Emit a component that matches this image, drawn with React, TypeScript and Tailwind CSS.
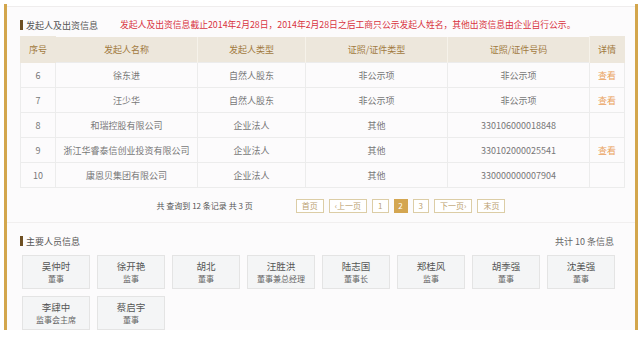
const rows = [
  { no: "6", name: "徐东进", type: "自然人股东", certType: "非公示项", certNo: "非公示项", link: true },
  { no: "7", name: "汪少华", type: "自然人股东", certType: "非公示项", certNo: "非公示项", link: true },
  { no: "8", name: "和瑞控股有限公司", type: "企业法人", certType: "其他", certNo: "330106000018848", link: false },
  { no: "9", name: "浙江华睿泰信创业投资有限公司", type: "企业法人", certType: "其他", certNo: "330102000025541", link: true },
  { no: "10", name: "康恩贝集团有限公司", type: "企业法人", certType: "其他", certNo: "330000000007904", link: false },
];

const people = [
  { name: "吴仲时", role: "董事" },
  { name: "徐开艳", role: "监事" },
  { name: "胡北", role: "董事" },
  { name: "汪胜洪", role: "董事兼总经理" },
  { name: "陆志国", role: "董事长" },
  { name: "郑桂风", role: "监事" },
  { name: "胡季强", role: "董事" },
  { name: "沈美强", role: "董事" },
  { name: "李肆中", role: "监事会主席" },
  { name: "蔡启宇", role: "董事" },
];

const pageBtn =
  "h-[14px] px-[5px] flex items-center justify-center border border-[#dccda6] bg-white text-[#bba170] text-[8px] leading-none";

function SectionTitle({ children }: { children: React.ReactNode }) {
  return (
    <div className="flex items-center h-[12px] gap-[3px]">
      <span className="w-[3px] h-[10px] bg-[#6e4f22]" />
      <span className="text-[9px] text-[#555] leading-none">{children}</span>
    </div>
  );
}

export default function App() {
  return (
    <div
      className="w-[644px] h-[339px] bg-white overflow-hidden pt-[4px]"
      style={{ fontFamily: '"Noto Sans CJK SC", "Noto Sans", sans-serif' }}
    >
      <div className="ml-[4px] w-[634px] h-[326px] border-x-[3px] border-[#d3a64c] bg-[#fcfbfc]">
        <div className="h-[3px] bg-white border-b border-[#efeded]" />

        {/* 发起人及出资信息 */}
        <div className="pl-[13px] pr-[11px] pt-[12px]">
          <div className="flex items-center">
            <SectionTitle>发起人及出资信息</SectionTitle>
            <span className="ml-[22px] text-[8.8px] leading-none text-[#d8333f]">
              发起人及出资信息截止2014年2月28日，2014年2月28日之后工商只公示发起人姓名，其他出资信息由企业自行公示。
            </span>
          </div>

          <table className="mt-[5px] w-[604px] table-fixed border-collapse text-[9px] leading-none text-center">
            <colgroup>
              <col className="w-[35px]" />
              <col className="w-[142px]" />
              <col className="w-[108px]" />
              <col className="w-[142px]" />
              <col className="w-[142px]" />
              <col className="w-[35px]" />
            </colgroup>
            <thead>
              <tr className="h-[26px] bg-[#ede7dc] text-[#a27a3f]">
                <th className="font-normal border border-[#ede7dc]">序号</th>
                <th className="font-normal border-x border-[#f6f2ea]">发起人名称</th>
                <th className="font-normal border-x border-[#f6f2ea]">发起人类型</th>
                <th className="font-normal border-x border-[#f6f2ea]">证照/证件类型</th>
                <th className="font-normal border-x border-[#f6f2ea]">证照/证件号码</th>
                <th className="font-normal border border-[#ede7dc]">详情</th>
              </tr>
            </thead>
            <tbody className="text-[#777]">
              {rows.map((r) => (
                <tr key={r.no} className="h-[25px]">
                  <td className="border border-[#ececec]">{r.no}</td>
                  <td className="border border-[#ececec]">{r.name}</td>
                  <td className="border border-[#ececec]">{r.type}</td>
                  <td className="border border-[#ececec]">{r.certType}</td>
                  <td className="border border-[#ececec]">{r.certNo}</td>
                  <td className="border border-[#ececec] text-[#eaa35c]">{r.link ? "查看" : ""}</td>
                </tr>
              ))}
            </tbody>
          </table>

          <div className="mt-[11px] flex items-center justify-center pl-[18px] gap-[5px]">
            <span className="text-[8px] leading-none text-[#555] mr-[38px]">共 查询到 12 条记录 共 3 页</span>
            <span className={pageBtn}>首页</span>
            <span className={pageBtn}>‹上一页</span>
            <span className={pageBtn}>1</span>
            <span className="h-[14px] w-[14px] flex items-center justify-center bg-[#d4a651] text-white text-[8px] leading-none">2</span>
            <span className={pageBtn}>3</span>
            <span className={pageBtn}>下一页›</span>
            <span className={pageBtn}>末页</span>
          </div>
        </div>

        <div className="mt-[9px] border-t border-[#f1efef]" />

        {/* 主要人员信息 */}
        <div className="pl-[13px] pr-[11px] pt-[12px]">
          <div className="flex items-center justify-between">
            <SectionTitle>主要人员信息</SectionTitle>
            <span className="text-[9px] leading-none text-[#666] mr-[10px]">共计 10 条信息</span>
          </div>

          <div className="mt-[8px] ml-[2px] flex flex-wrap gap-x-[7px] gap-y-[7px] w-[600px]">
            {people.map((p) => (
              <div
                key={p.name}
                className="w-[68px] h-[34px] flex flex-col items-center justify-center bg-[#f4f5f6] border border-[#e4e4e4]"
              >
                <span className="text-[9.5px] leading-[14px] text-[#555]">{p.name}</span>
                <span className="text-[8px] leading-[12px] text-[#666]">{p.role}</span>
              </div>
            ))}
          </div>
        </div>
      </div>
    </div>
  );
}
